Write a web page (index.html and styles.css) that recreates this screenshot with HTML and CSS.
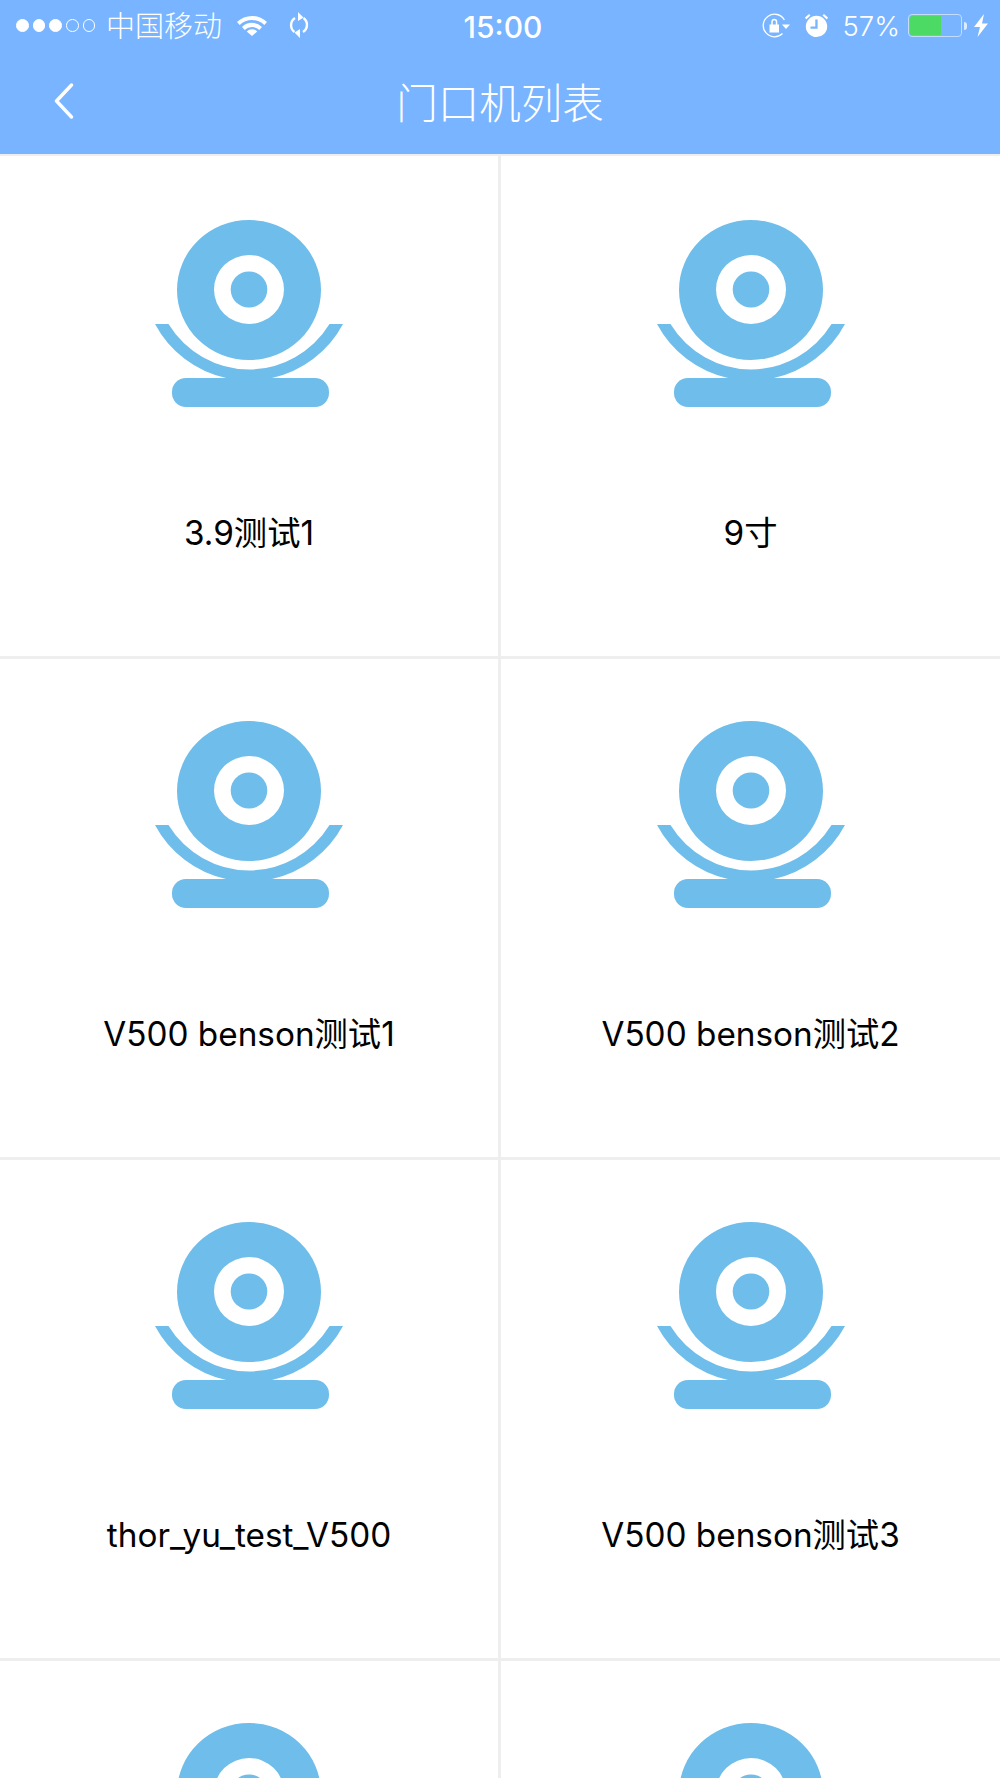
FILE: index.html
```html
<!DOCTYPE html>
<html lang="zh-CN">
<head>
<meta charset="utf-8">
<title>门口机列表</title>
<link rel="stylesheet" href="styles.css">
</head>
<body>
<svg class="defs" width="0" height="0" aria-hidden="true">
  <symbol id="cam" viewBox="0 0 188 187">
    <path fill-rule="evenodd" d="M94 0a72 70 0 1 0 0 140a72 70 0 1 0 0-140zM94 35a35 34.500 0 1 1 0 69a35 34.500 0 1 1 0-69z"/>
    <ellipse cx="94" cy="69.500" rx="18.300" ry="18"/>
    <path d="M0 104h13.500A95.500 95.500 0 0 0 94 149.500A95.500 95.500 0 0 0 174.500 104H188A106.500 106.500 0 0 1 117 158H71A106.500 106.500 0 0 1 0 104z"/>
    <rect x="17" y="158" width="157" height="29" rx="14"/>
  </symbol>
</svg>
<div class="page">
  <header class="header">
    <div class="status">
      <div class="status-left">
        <div class="signal"><i class="dot on"></i><i class="dot on"></i><i class="dot on"></i><i class="dot"></i><i class="dot"></i></div>
        <span class="carrier">中国移动</span>
        <svg class="wifi" viewBox="0 0 30 21"><path d="M0 7A21.500 21.500 0 0 1 30 7L27.300 10A17.500 17.500 0 0 0 2.700 10z"/><path d="M5 12A14 14 0 0 1 25 12L22.300 15A10.500 10.500 0 0 0 7.700 15z"/><path d="M9.700 16.500A7.500 7.500 0 0 1 20.300 16.500L15 21z"/></svg>
        <svg class="sync" viewBox="0 0 22 26"><path d="M7 6A8.500 8.500 0 0 0 6.500 20M15 20A8.500 8.500 0 0 0 15.500 6" fill="none" stroke="#fff" stroke-width="2.400"/><path d="M10 0L15.500 5.500L10 9zM12 26L6.500 20.500L12 17z"/></svg>
      </div>
      <time class="clock">15:00</time>
      <div class="status-right">
        <svg class="rotlock" viewBox="0 0 29 25"><path d="M21.500 20.500A11.300 11.300 0 1 1 23.400 7" fill="none" stroke="#fff" stroke-width="1.300"/><path d="M21 11.500H29L25 16z"/><path d="M8.500 11.500H18V19.500H8.500zM10.300 11.500V8.700A3 3 0 0 1 16.300 8.700V11.500H14.800V8.700A1.500 1.500 0 0 0 11.800 8.700V11.500z"/></svg>
        <svg class="alarm" viewBox="0 0 23 23"><path fill-rule="evenodd" d="M11.500 1.800a10.700 10.600 0 1 0 0 21.200a10.700 10.600 0 1 0 0-21.200zM10.300 5.500h2.300v9.300H5.500v-2.300h4.800z"/><path d="M0 3.500L4 0L5.500 1.500L1.200 5.500zM23 3.500L19 0L17.500 1.500L21.800 5.500z"/></svg>
        <span class="percent">57%</span>
        <div class="battery"><div class="battery-fill"></div></div>
        <div class="battery-nub"></div>
        <svg class="bolt" viewBox="0 0 14 23"><path d="M10 0L0 13H6L3.500 23L14 9.500H8z"/></svg>
      </div>
    </div>
    <nav class="nav">
      <svg class="back" viewBox="0 0 20 36"><path d="M17.500 2L2.500 18L17.500 34" fill="none" stroke="#fff" stroke-width="3.400" stroke-linecap="round" stroke-linejoin="round"/></svg>
      <h1 class="title">门口机列表</h1>
    </nav>
  </header>
  <main class="grid">
    <a class="cell"><svg class="cam"><use href="#cam"/></svg><span class="name">3.9测试1</span></a>
    <a class="cell"><svg class="cam"><use href="#cam"/></svg><span class="name">9寸</span></a>
    <a class="cell"><svg class="cam"><use href="#cam"/></svg><span class="name">V500 benson测试1</span></a>
    <a class="cell"><svg class="cam"><use href="#cam"/></svg><span class="name">V500 benson测试2</span></a>
    <a class="cell"><svg class="cam"><use href="#cam"/></svg><span class="name">thor_yu_test_V500</span></a>
    <a class="cell"><svg class="cam"><use href="#cam"/></svg><span class="name">V500 benson测试3</span></a>
    <a class="cell"><svg class="cam"><use href="#cam"/></svg></a>
    <a class="cell"><svg class="cam"><use href="#cam"/></svg></a>
  </main>
</div>
</body>
</html>
```
FILE: styles.css
```css
* { box-sizing: border-box; }
html, body { margin: 0; padding: 0; background: #fff; }
body { font-family: "Inter", "Noto Sans CJK SC", sans-serif; }
.defs { display: block; height: 0; }
.page { width: 1000px; height: 1778px; overflow: hidden; background: #eeeeee; }

.header { height: 154px; background: #78b4ff; color: #fff; fill: #fff; }
.status { height: 48px; display: grid; grid-template-columns: 1fr auto 1fr; align-items: center; padding: 0 12px 0 16px; }
.status-left { display: flex; align-items: center; }
.status-right { display: flex; align-items: center; justify-content: flex-end; }
.signal { display: flex; gap: 4px; width: 90px; }
.dot { width: 12.700px; height: 12.700px; border-radius: 50%; border: 1px solid #fff; display: block; }
.dot.on { background: #fff; }
.carrier { font-size: 29px; line-height: 48px; font-weight: 300; margin-top: 3px; }
.wifi { width: 30px; height: 21px; margin-left: 15px; margin-top: -1px; }
.sync { width: 22px; height: 26px; margin-left: 21px; margin-top: -1px; }
.clock { font-size: 30px; line-height: 48px; font-weight: 500; margin: 2px 0 0 2px; }
.rotlock { width: 29px; height: 25px; }
.alarm { width: 23px; height: 23px; margin-left: 15px; }
.percent { font-size: 27.500px; line-height: 48px; margin-left: 15px; font-weight: 300; margin-top: 1px; }
.battery { width: 54px; height: 23px; margin-left: 8px; border: 1px solid #c4dcff; border-radius: 4px; padding: 1px; }
.battery-fill { width: 31px; height: 100%; background: #4cd964; border-radius: 2px 0 0 2px; }
.battery-nub { width: 3px; height: 8px; margin-left: 2px; background: #dcebff; border-radius: 0 3px 3px 0; }
.bolt { width: 14px; height: 23px; margin-left: 7px; }

.nav { position: relative; height: 106px; display: flex; align-items: center; justify-content: center; }
.back { position: absolute; left: 54px; top: 35px; width: 20px; height: 36px; }
.title { margin: 5px 0 0; font-size: 41.500px; line-height: 100px; font-weight: 300; }

.grid { display: grid; grid-template-columns: 498px 499px; grid-template-rows: 500px 498px 498px 498px; gap: 3px; margin-top: 2px; height: 1622px; overflow: hidden; }
.cell { background: #fff; display: flex; flex-direction: column; align-items: center; padding-top: 62px; }
.cell:nth-child(-n+2) { padding-top: 64px; }
.cam { width: 188px; height: 187px; fill: #6fbdea; flex: none; }
.name { margin-top: 103px; font-size: 33.300px; line-height: 46px; color: #000; white-space: nowrap; font-weight: 400; }
```
